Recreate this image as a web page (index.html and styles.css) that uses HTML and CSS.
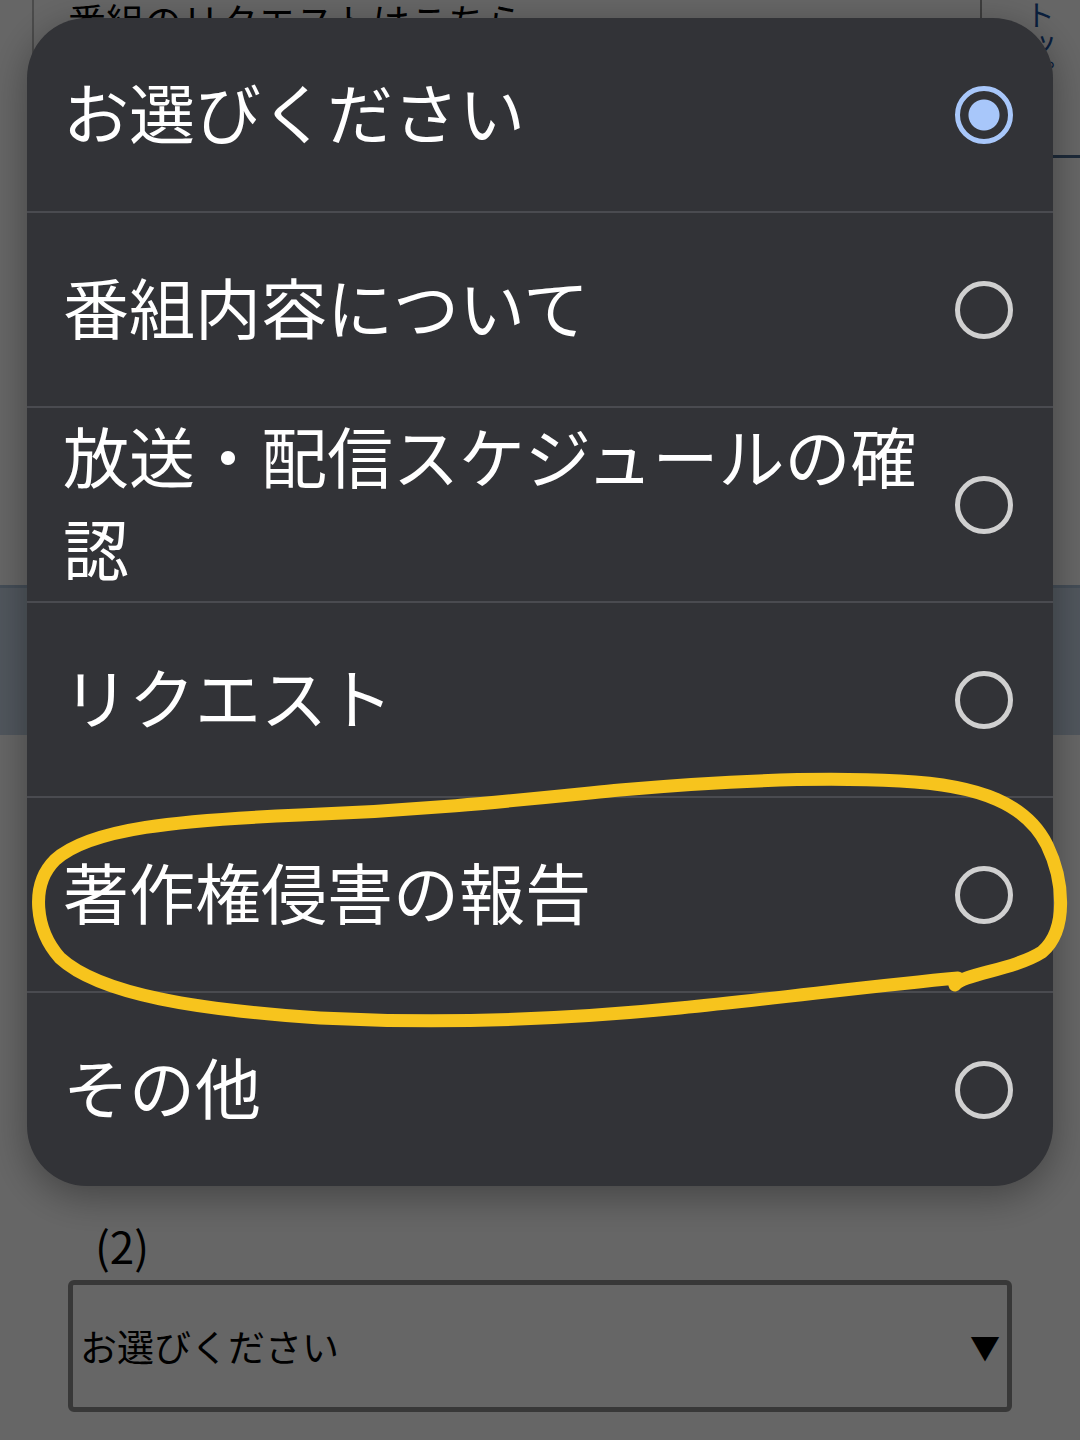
FILE: index.html
```html
<!DOCTYPE html>
<html lang="ja">
<head>
    <meta charset="UTF-8">
    <meta name="viewport" content="width=device-width, initial-scale=1.0">
    <title>お問い合わせ</title>
    <link rel="stylesheet" href="styles.css">
</head>
<body>
    <div class="page">
        <div class="request-box">
            <p class="request-text">番組のリクエストはこちら</p>
            <div class="request-side"><span class="side-link">トップ</span></div>
        </div>
        <div class="band"></div>
        <div class="field">
            <p class="field-label">(2)</p>
            <div class="select-box">
                <span>お選びください</span>
                <span class="arrow">▼</span>
            </div>
        </div>
    </div>

    <div class="overlay">
        <div class="dialog">
            <label class="option">
                <span class="option-text">お選びください</span>
                <input type="radio" name="kind" checked>
            </label>
            <label class="option">
                <span class="option-text">番組内容について</span>
                <input type="radio" name="kind">
            </label>
            <label class="option">
                <span class="option-text">放送・配信スケジュールの確認</span>
                <input type="radio" name="kind">
            </label>
            <label class="option">
                <span class="option-text">リクエスト</span>
                <input type="radio" name="kind">
            </label>
            <label class="option">
                <span class="option-text">著作権侵害の報告</span>
                <input type="radio" name="kind">
            </label>
            <label class="option">
                <span class="option-text">その他</span>
                <input type="radio" name="kind">
            </label>
        </div>
    </div>

    <!-- 手書きの丸 -->
    <svg class="annotation" viewBox="0 0 1080 1440" width="1080" height="1440">
        <path d="M 955 985 C 962 974, 1014 970, 1042 952 C 1068 930, 1064 880, 1047 845 C 1027 805, 982 785, 900 781 C 820 777, 720 781, 620 790 C 520 800, 430 810, 300 815 C 180 820, 90 828, 55 860 C 30 885, 35 930, 60 958 C 100 995, 200 1010, 320 1018 C 440 1024, 560 1020, 680 1008 C 780 998, 880 985, 958 978"
              fill="none" stroke="#f7c41d" stroke-width="13" stroke-linecap="round" stroke-linejoin="round"/>
    </svg>
</body>
</html>
```

FILE: styles.css
```css
body {
    margin: 0;
    font-family: "Noto Sans CJK JP", "Noto Sans", sans-serif;
    background: #fff;
}
.page {
    height: 1440px;
    overflow: hidden;
}
.request-box {
    display: flex;
    height: 158px;
    margin-left: 32px;
    border-left: 2px solid #bbb;
}
.request-text {
    flex: 1;
    margin: 0;
    padding-left: 34px;
    font-size: 38px;
    line-height: 40px;
    color: #000;
}
.request-side {
    width: 100px;
    box-sizing: border-box;
    border-left: 2px solid #999;
    border-bottom: 3px solid #4a6a90;
    padding-left: 36px;
}
.side-link {
    writing-mode: vertical-rl;
    font-size: 30px;
    color: #1a4f9a;
}
.band {
    margin-top: 427px;
    height: 147px;
    background: #c8d7e8;
    border-top: 3px solid #aac0d8;
}
.field {
    margin-top: 484px;
    padding: 0 68px;
}
.field-label {
    margin: 0 0 8px;
    padding-left: 27px;
    font-size: 44px;
    line-height: 53px;
    color: #000;
}
.select-box {
    display: flex;
    align-items: center;
    justify-content: space-between;
    height: 132px;
    box-sizing: border-box;
    padding: 0 7px;
    border: 5px solid #8c8c8c;
    border-radius: 6px;
    font-size: 37px;
    color: #000;
}
.arrow {
    font-size: 30px;
}

.overlay {
    position: fixed;
    inset: 0;
    padding: 18px 27px;
    background: rgba(0, 0, 0, 0.6);
}
.dialog {
    background: #323337;
    border-radius: 60px;
    overflow: hidden;
    box-shadow: 0 10px 40px rgba(0, 0, 0, 0.35);
}
.option {
    display: flex;
    align-items: center;
    justify-content: space-between;
    height: 193px;
    padding: 0 40px 0 36px;
    border-top: 2px solid #4a4b50;
}
.option:first-child {
    border-top: none;
}
.option-text {
    width: 885px;
    padding-bottom: 10px;
    font-size: 66px;
    line-height: 92px;
    color: #fff;
}
.option input {
    appearance: none;
    width: 58px;
    height: 58px;
    margin: 0;
    box-sizing: border-box;
    border: 5px solid #d0d0d0;
    border-radius: 50%;
}
.option input:checked {
    border-color: #a8c7fa;
    background: radial-gradient(circle, #a8c7fa 0 15px, transparent 16px);
}

.annotation {
    position: absolute;
    top: 0;
    left: 0;
    pointer-events: none;
}
```
